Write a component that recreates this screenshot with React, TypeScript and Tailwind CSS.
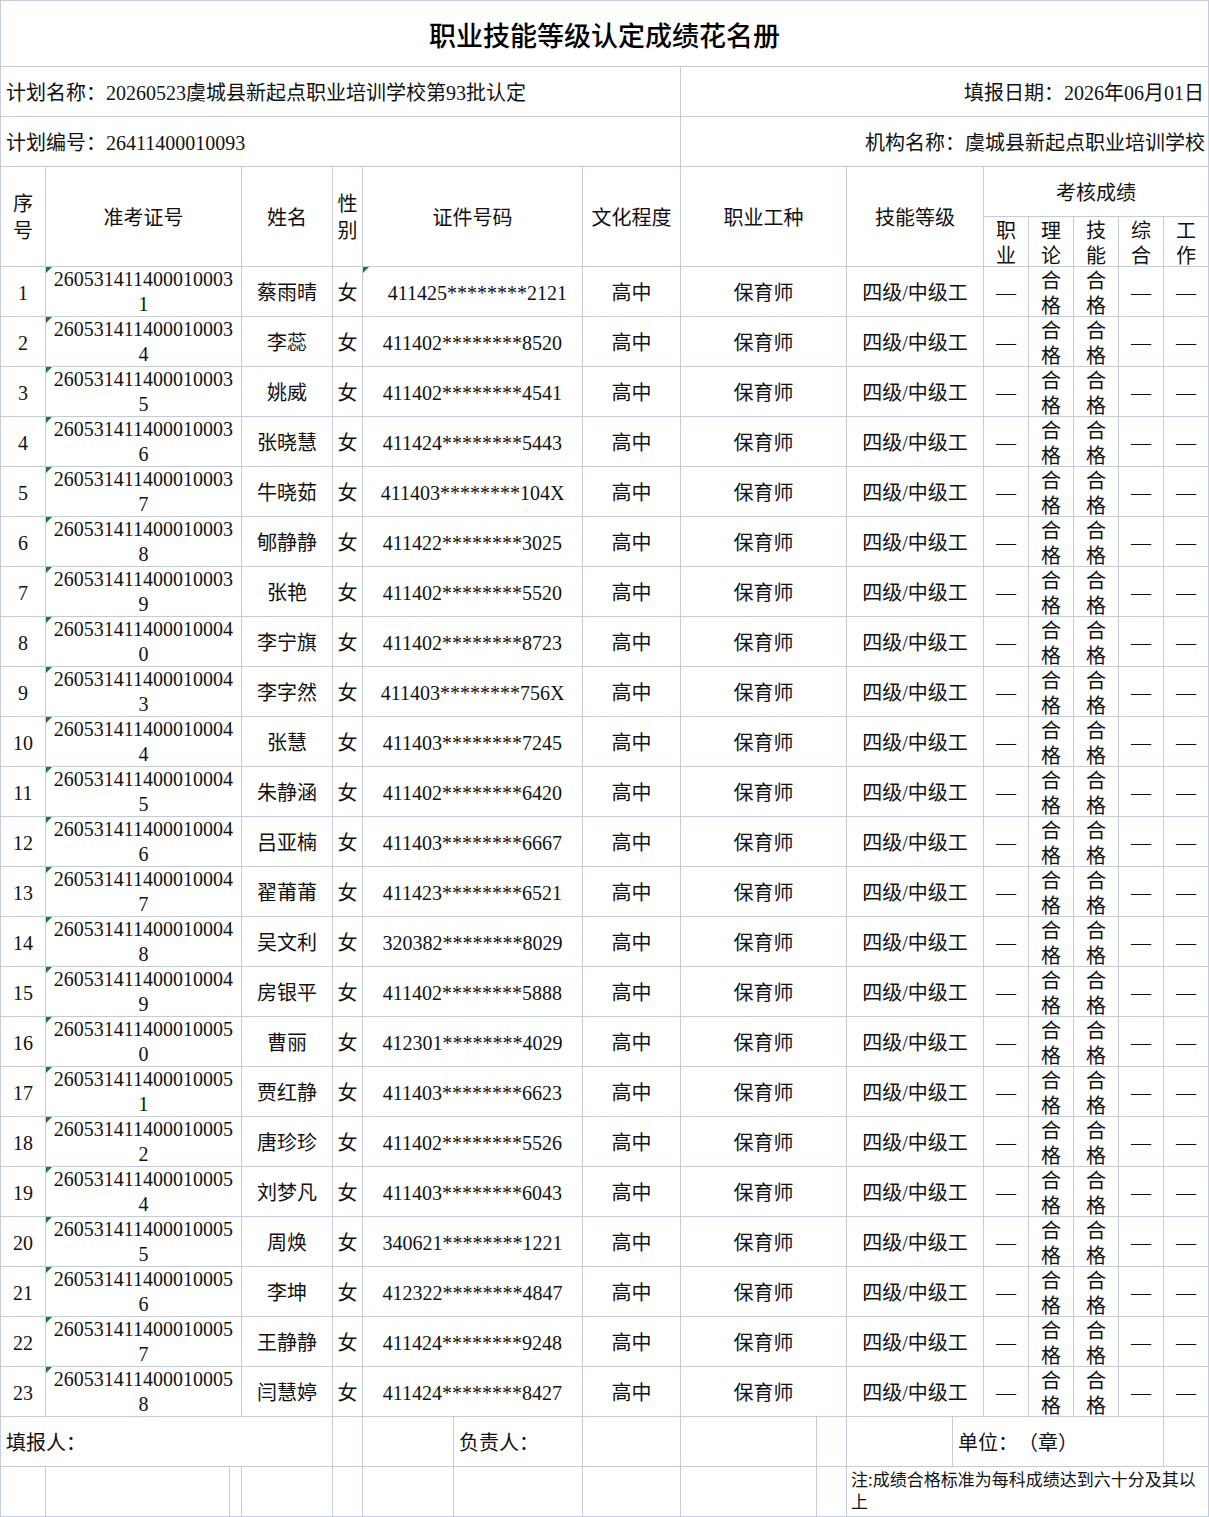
import type { ReactNode } from 'react'

type Row = { no: string; name: string; id: string }

const rows: Row[] = [
  { no: '2605314114000100031', name: '蔡雨晴', id: '411425********2121' },
  { no: '2605314114000100034', name: '李蕊', id: '411402********8520' },
  { no: '2605314114000100035', name: '姚威', id: '411402********4541' },
  { no: '2605314114000100036', name: '张晓慧', id: '411424********5443' },
  { no: '2605314114000100037', name: '牛晓茹', id: '411403********104X' },
  { no: '2605314114000100038', name: '郇静静', id: '411422********3025' },
  { no: '2605314114000100039', name: '张艳', id: '411402********5520' },
  { no: '2605314114000100040', name: '李宁旗', id: '411402********8723' },
  { no: '2605314114000100043', name: '李字然', id: '411403********756X' },
  { no: '2605314114000100044', name: '张慧', id: '411403********7245' },
  { no: '2605314114000100045', name: '朱静涵', id: '411402********6420' },
  { no: '2605314114000100046', name: '吕亚楠', id: '411403********6667' },
  { no: '2605314114000100047', name: '翟莆莆', id: '411423********6521' },
  { no: '2605314114000100048', name: '吴文利', id: '320382********8029' },
  { no: '2605314114000100049', name: '房银平', id: '411402********5888' },
  { no: '2605314114000100050', name: '曹丽', id: '412301********4029' },
  { no: '2605314114000100051', name: '贾红静', id: '411403********6623' },
  { no: '2605314114000100052', name: '唐珍珍', id: '411402********5526' },
  { no: '2605314114000100054', name: '刘梦凡', id: '411403********6043' },
  { no: '2605314114000100055', name: '周焕', id: '340621********1221' },
  { no: '2605314114000100056', name: '李坤', id: '412322********4847' },
  { no: '2605314114000100057', name: '王静静', id: '411424********9248' },
  { no: '2605314114000100058', name: '闫慧婷', id: '411424********8427' }
]

// spreadsheet cell: right + bottom grid line, text centred unless told otherwise
function Cell({ className = '', children }: { className?: string; children?: ReactNode }) {
  return (
    <div className={`relative flex items-center justify-center overflow-hidden border-r border-b border-[#c5cbde] ${className}`}>
      {children}
    </div>
  )
}

// green "number stored as text" marker
function Flag() {
  return (
    <span className="absolute top-0 left-0 h-0 w-0 border-t-[6px] border-r-[6px] border-t-[#1f7a2e] border-r-transparent" />
  )
}

function Stack({ a, b }: { a: string; b: string }) {
  return (
    <div className="flex flex-col items-center leading-[25px]">
      <span>{a}</span>
      <span>{b}</span>
    </div>
  )
}

export default function App() {
  return (
    <div className="w-[1209px] bg-white text-[20px] text-[#111] [text-spacing-trim:space-all] font-['Liberation_Serif','Noto_Sans_CJK_SC',serif]">
      <div className="grid grid-cols-[45px_184px_12px_91px_30px_91px_129px_98px_136px_30px_106px_31px_45px_45px_45px_45px_45px] grid-rows-[66px_repeat(29,50px)] border-t border-l border-[#c5cbde]">
        {/* title */}
        <Cell className="col-span-17 pt-1 text-[27px] font-medium font-['Noto_Sans_CJK_SC',sans-serif] text-black">
          职业技能等级认定成绩花名册
        </Cell>

        {/* plan info */}
        <Cell className="col-span-8 justify-start pl-[5px] pt-[2px] whitespace-nowrap">
          计划名称：20260523虞城县新起点职业培训学校第93批认定
        </Cell>
        <Cell className="col-span-9 justify-end pr-[4px] pt-[2px] whitespace-nowrap">填报日期：2026年06月01日</Cell>
        <Cell className="col-span-8 justify-start pl-[5px] pt-[2px] whitespace-nowrap">计划编号：26411400010093</Cell>
        <Cell className="col-span-9 justify-end pr-[3px] pt-[2px] whitespace-nowrap">机构名称：虞城县新起点职业培训学校</Cell>

        {/* header */}
        <Cell className="row-span-2 pt-[3px]">
          <div className="flex flex-col items-center leading-[27px]">
            <span>序</span>
            <span>号</span>
          </div>
        </Cell>
        <Cell className="row-span-2 col-span-2 pt-[2px]">准考证号</Cell>
        <Cell className="row-span-2 pt-[2px]">姓名</Cell>
        <Cell className="row-span-2 pt-[3px]">
          <div className="flex flex-col items-center leading-[27px]">
            <span>性</span>
            <span>别</span>
          </div>
        </Cell>
        <Cell className="row-span-2 col-span-2 pt-[2px]">证件号码</Cell>
        <Cell className="row-span-2 pt-[2px]">文化程度</Cell>
        <Cell className="row-span-2 col-span-2 pt-[2px]">职业工种</Cell>
        <Cell className="row-span-2 col-span-2 pt-[2px]">技能等级</Cell>
        <Cell className="col-span-5 pt-[2px]">考核成绩</Cell>
        <Cell className="items-start pt-[2px]"><Stack a="职" b="业" /></Cell>
        <Cell className="items-start pt-[2px]"><Stack a="理" b="论" /></Cell>
        <Cell className="items-start pt-[2px]"><Stack a="技" b="能" /></Cell>
        <Cell className="items-start pt-[2px]"><Stack a="综" b="合" /></Cell>
        <Cell className="items-start pt-[2px]"><Stack a="工" b="作" /></Cell>

        {/* data rows */}
        {rows.map((r, i) => (
          <div key={r.no} className="contents">
            <Cell className="pt-[2px]">{i + 1}</Cell>
            <Cell className="col-span-2 pt-[1px]">
              <Flag />
              <Stack a={r.no.slice(0, 18)} b={r.no.slice(18)} />
            </Cell>
            <Cell className="pt-[2px]">{r.name}</Cell>
            <Cell className="pt-[2px]">女</Cell>
            <Cell className="col-span-2 pt-[2px]">
              {i === 0 && <Flag />}
              <span className={i === 0 ? 'pl-[10px]' : ''}>{r.id}</span>
            </Cell>
            <Cell className="pt-[2px]">高中</Cell>
            <Cell className="col-span-2 pt-[2px]">保育师</Cell>
            <Cell className="col-span-2 pt-[2px]">四级/中级工</Cell>
            <Cell className="pt-[2px]">—</Cell>
            <Cell className="items-start pt-[2px]"><Stack a="合" b="格" /></Cell>
            <Cell className="items-start pt-[2px]"><Stack a="合" b="格" /></Cell>
            <Cell className="pt-[2px]">—</Cell>
            <Cell className="pt-[2px]">—</Cell>
          </div>
        ))}

        {/* footer */}
        <Cell className="col-span-4 justify-start pl-[5px] pt-[2px]">填报人：</Cell>
        <Cell />
        <Cell />
        <Cell className="justify-start pl-[5px] pt-[2px]">负责人：</Cell>
        <Cell />
        <Cell />
        <Cell />
        <Cell />
        <Cell className="col-span-5 justify-start pl-[5px] pt-[2px]">单位：（章）</Cell>
        <Cell />

        <Cell />
        <Cell />
        <Cell />
        <Cell />
        <Cell />
        <Cell />
        <Cell />
        <Cell />
        <Cell />
        <Cell />
        <Cell className="col-span-7 items-start justify-start pl-[4px] pt-[1px] text-[17px] leading-[22px] font-['Noto_Sans_CJK_SC',sans-serif]">
          <div>
            注:成绩合格标准为每科成绩达到六十分及其以
            <br />
            上
          </div>
        </Cell>
      </div>
    </div>
  )
}
